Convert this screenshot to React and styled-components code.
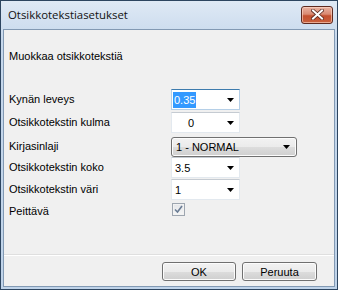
import React from "react";
import styled, { createGlobalStyle } from "styled-components";

const GlobalStyle = createGlobalStyle`
  html, body {
    margin: 0;
    padding: 0;
    background: #ffffff;
  }
  * {
    box-sizing: border-box;
  }
`;

const Window = styled.div`
  width: 338px;
  height: 290px;
  display: flex;
  flex-direction: column;
  border: 1px solid #2d4560;
  padding: 0 2px 2px 2px;
  background: linear-gradient(#dfe9f5, #c6d8ec 40px, #bfd3e9);
  font-family: "Liberation Sans", Arial, sans-serif;
  font-size: 11px;
  color: #000;
`;

const TitleBar = styled.div`
  height: 28px;
  display: flex;
  align-items: center;
  justify-content: space-between;
  padding: 0 2px 0 5px;
`;

const Title = styled.span`
  font-family: "Open Sans", "Noto Sans", sans-serif;
  font-size: 11.4px;
  color: #111;
  margin-top: -1px;
`;

const CloseButton = styled.div`
  width: 32px;
  height: 18px;
  margin-top: -1px;
  border: 1px solid #5e2a20;
  border-radius: 3px;
  display: flex;
  align-items: center;
  justify-content: center;
  background: linear-gradient(#e9b2a2 0%, #d98a72 45%, #c4502f 55%, #c9623e 100%);
  box-shadow: inset 0 0 0 1px rgba(255, 220, 205, 0.6);
`;

const Panel = styled.div`
  flex: 1;
  display: flex;
  flex-direction: column;
  border: 1px solid #8299b3;
  background: #f0f0f0;
`;

const Heading = styled.div`
  padding: 20px 0 0 5px;
  line-height: 13px;
`;

const Form = styled.div`
  display: grid;
  grid-template-columns: 162px auto;
  grid-template-rows: 23px 23px 22px 22px 23px 22px;
  margin-top: 26px;
  padding-left: 5px;
  align-items: start;
`;

const Label = styled.span`
  line-height: ${(p) => p.$h || 21}px;
`;

const Combo = styled.div`
  width: ${(p) => p.$w || 69}px;
  height: 21px;
  display: flex;
  align-items: center;
  justify-content: space-between;
  padding: 0 5px 0 ${(p) => p.$pad || 3}px;
  background: #fff;
  border: 1px solid ${(p) => (p.$focus ? "#b5cfe7" : "#e3e9ef")};
  border-top-color: ${(p) => (p.$focus ? "#3d7bad" : "#c5cbd2")};
`;

const DropButton = styled.div`
  width: 126px;
  height: 20px;
  margin-top: 2px;
  display: flex;
  align-items: center;
  justify-content: space-between;
  padding: 0 6px 0 4px;
  border: 1px solid #707070;
  border-radius: 3px;
  background: linear-gradient(#f2f2f2 0%, #ebebeb 50%, #dddddd 50%, #cfcfcf 100%);
  box-shadow: inset 0 0 0 1px #fcfcfc;
`;

const Selected = styled.span`
  background: #3399ff;
  color: #fff;
  padding: 1px 1px;
  line-height: 14px;
`;

const CheckBox = styled.div`
  width: 13px;
  height: 13px;
  margin-top: 1px;
  margin-left: 1px;
  border: 1px solid #9ea6b0;
  background: linear-gradient(#e4e6e9, #f6f6f6);
  box-shadow: inset 0 0 0 1px #f2f2f2;
  display: flex;
  align-items: center;
  justify-content: center;
`;

const Footer = styled.div`
  margin-top: auto;
  display: flex;
  justify-content: flex-end;
  gap: 6px;
  padding: 7px 17px 5px 0;
  border-top: 1px solid #dfdfdf;
  box-shadow: inset 0 1px 0 #ffffff;
`;

const Button = styled.div`
  width: ${(p) => p.$w}px;
  height: 19px;
  display: flex;
  align-items: center;
  justify-content: center;
  border: 1px solid #707070;
  border-radius: 3px;
  background: linear-gradient(#f2f2f2 0%, #ebebeb 50%, #dddddd 50%, #cfcfcf 100%);
  box-shadow: inset 0 0 0 1px #fcfcfc;
`;

const Arrow = () => (
  <svg width="7" height="4" viewBox="0 0 7 4">
    <path d="M0 0H7L3.5 4Z" fill="#000" />
  </svg>
);

const CloseGlyph = () => (
  <svg width="13" height="11" viewBox="0 0 13 11">
    <path
      d="M2 1.5L11 9.5M11 1.5L2 9.5"
      stroke="#5a2a20"
      strokeWidth="3.6"
      strokeLinecap="square"
    />
    <path
      d="M2 1.5L11 9.5M11 1.5L2 9.5"
      stroke="#ffffff"
      strokeWidth="2"
      strokeLinecap="square"
    />
  </svg>
);

const CheckMark = () => (
  <svg width="9" height="9" viewBox="0 0 9 9">
    <path d="M1 4.5L3.5 7L8 1" stroke="#6a7c94" strokeWidth="1.6" fill="none" />
  </svg>
);

const App = () => {
  return (
    <>
      <GlobalStyle />
      <Window>
        <TitleBar>
          <Title>Otsikkotekstiasetukset</Title>
          <CloseButton>
            <CloseGlyph />
          </CloseButton>
        </TitleBar>
        <Panel>
          <Heading>Muokkaa otsikkotekstiä</Heading>
          <Form>
            <Label>Kynän leveys</Label>
            <Combo $focus $pad={1}>
              <Selected>0.35</Selected>
              <Arrow />
            </Combo>

            <Label>Otsikkotekstin kulma</Label>
            <Combo $pad={16}>
              <span>0</span>
              <Arrow />
            </Combo>

            <Label $h={23}>Kirjasinlaji</Label>
            <DropButton>
              <span>1 - NORMAL</span>
              <Arrow />
            </DropButton>

            <Label>Otsikkotekstin koko</Label>
            <Combo>
              <span>3.5</span>
              <Arrow />
            </Combo>

            <Label>Otsikkotekstin väri</Label>
            <Combo>
              <span>1</span>
              <Arrow />
            </Combo>

            <Label $h={18}>Peittävä</Label>
            <CheckBox>
              <CheckMark />
            </CheckBox>
          </Form>
          <Footer>
            <Button $w={74}>OK</Button>
            <Button $w={75}>Peruuta</Button>
          </Footer>
        </Panel>
      </Window>
    </>
  );
};

export default App;
